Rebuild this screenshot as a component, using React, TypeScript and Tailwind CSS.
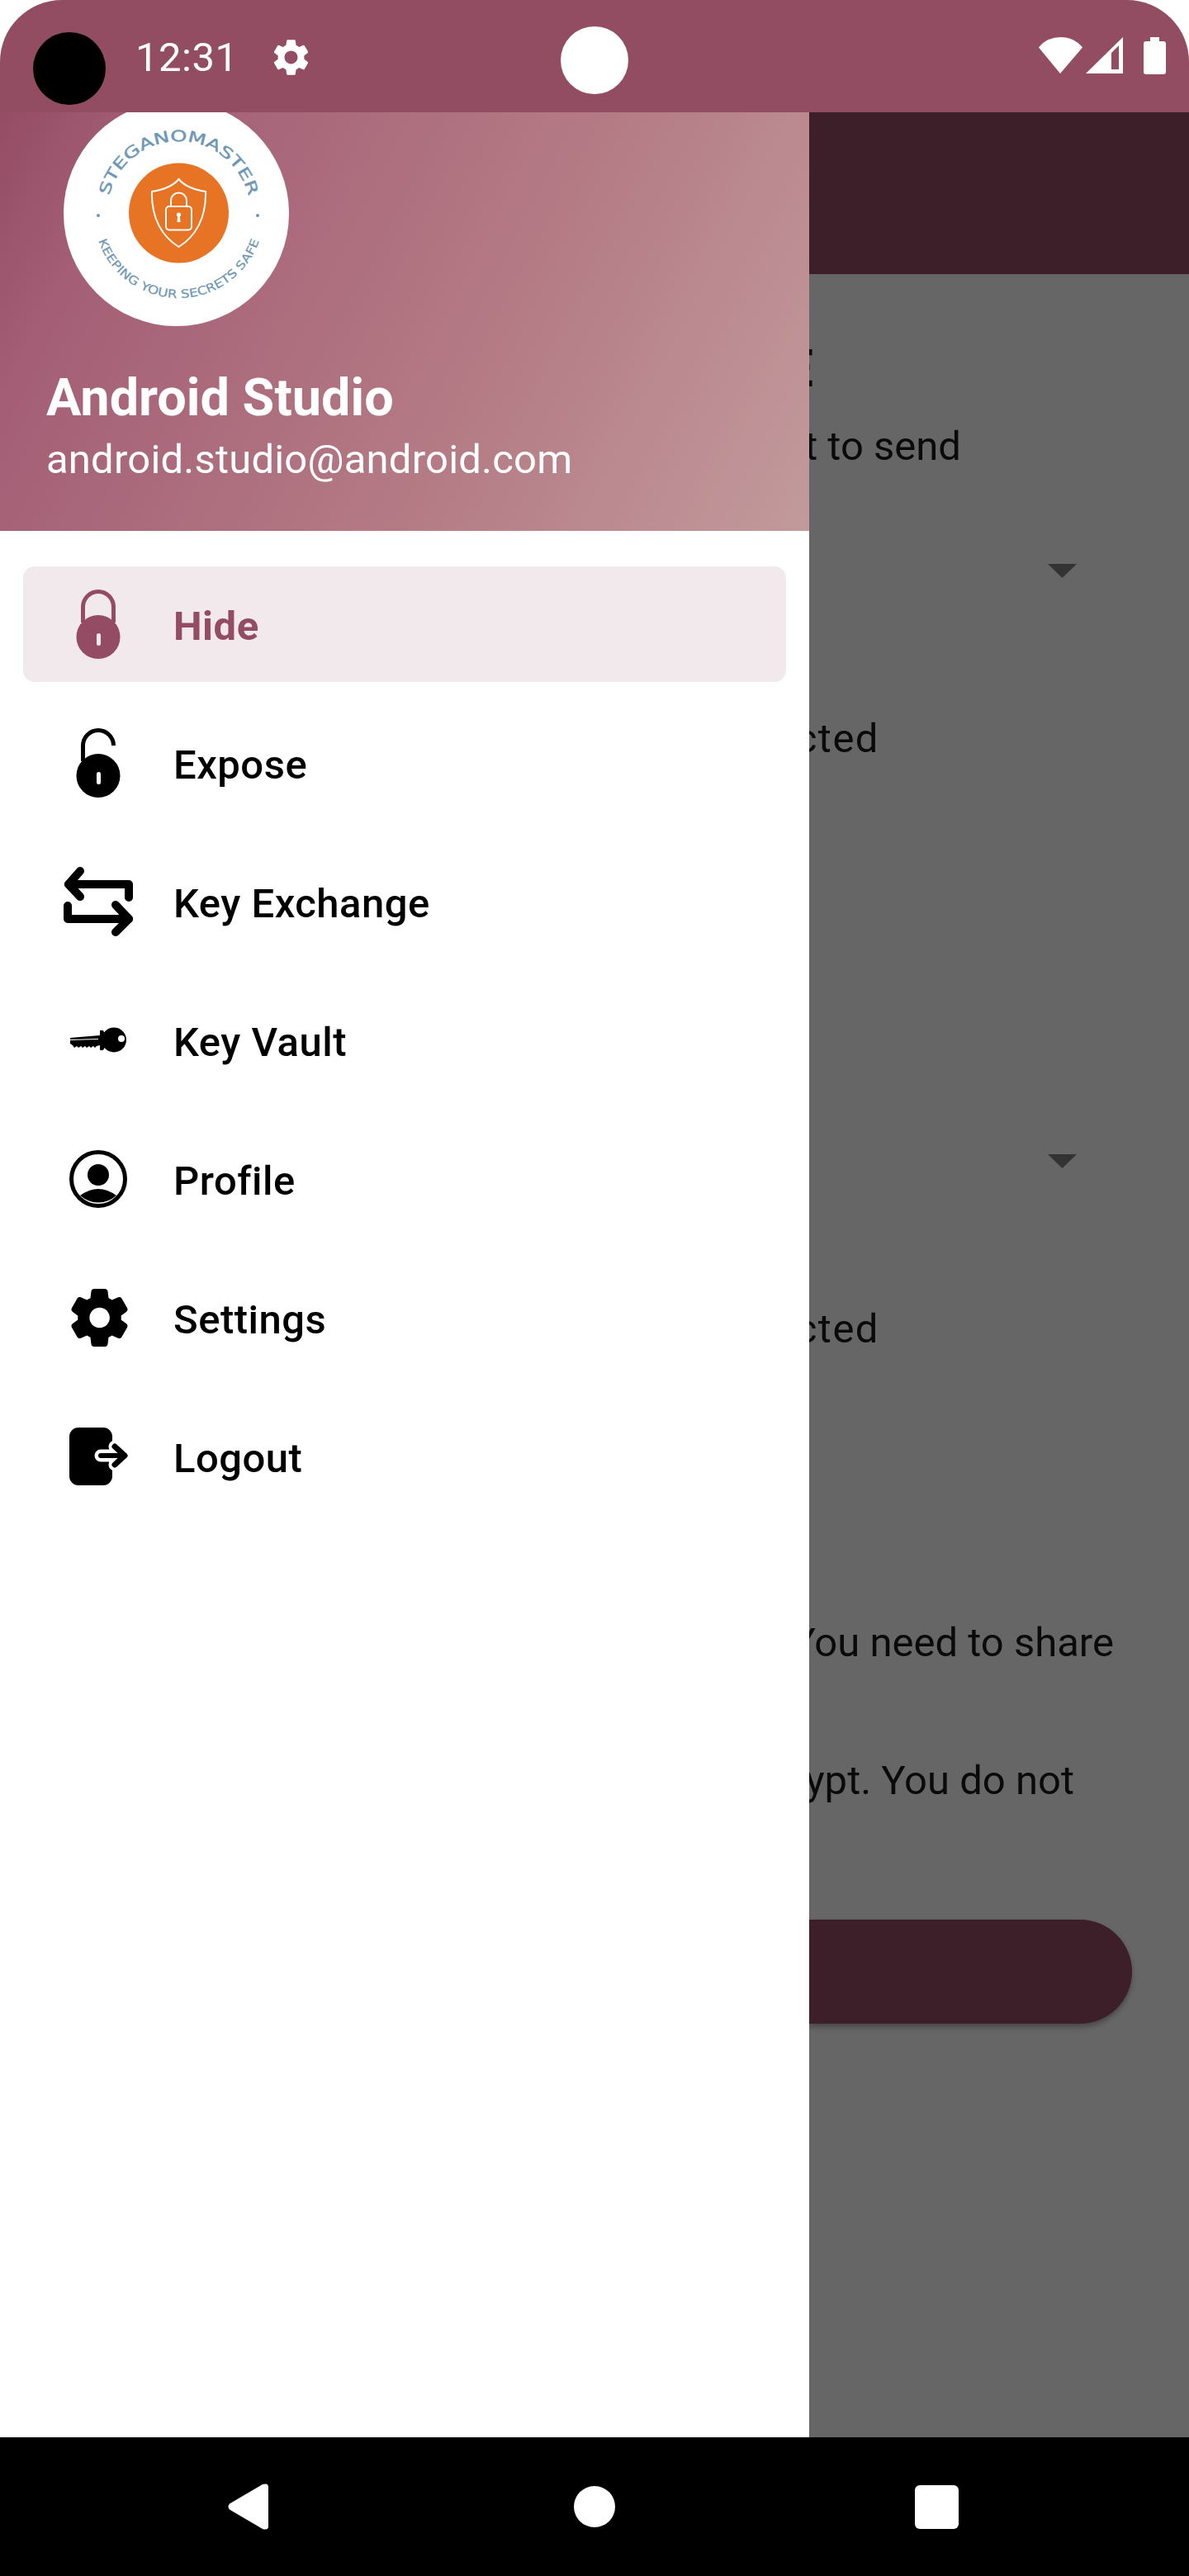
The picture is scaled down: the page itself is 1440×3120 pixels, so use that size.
import { MdSettings } from "react-icons/md";

const ROUNDED_GEAR =
  "M19.5,12c0,-0.23 -0.01,-0.45 -0.03,-0.68l1.86,-1.41c0.4,-0.3 0.51,-0.86 0.26,-1.3l-1.87,-3.23c-0.25,-0.44 -0.79,-0.62 -1.25,-0.42l-2.15,0.91c-0.37,-0.26 -0.76,-0.49 -1.17,-0.68l-0.29,-2.31C14.8,2.38 14.37,2 13.87,2h-3.73C9.63,2 9.2,2.38 9.14,2.88L8.85,5.19c-0.41,0.19 -0.8,0.42 -1.17,0.68L5.53,4.96c-0.46,-0.2 -1,-0.02 -1.25,0.42L2.41,8.62c-0.25,0.44 -0.14,0.99 0.26,1.3l1.86,1.41C4.51,11.55 4.5,11.77 4.5,12s0.01,0.45 0.03,0.68l-1.86,1.41c-0.4,0.3 -0.51,0.86 -0.26,1.3l1.87,3.23c0.25,0.44 0.79,0.62 1.25,0.42l2.15,-0.91c0.37,0.26 0.76,0.49 1.17,0.68l0.29,2.31C9.2,21.62 9.63,22 10.13,22h3.73c0.5,0 0.93,-0.38 0.99,-0.88l0.29,-2.31c0.41,-0.19 0.8,-0.42 1.17,-0.68l2.15,0.91c0.46,0.2 1,0.02 1.25,-0.42l1.87,-3.23c0.25,-0.44 0.14,-0.99 -0.26,-1.3l-1.86,-1.41C19.49,12.45 19.5,12.23 19.5,12zM12.04,15.5c-1.93,0 -3.5,-1.57 -3.5,-3.5s1.57,-3.5 3.5,-3.5s3.5,1.57 3.5,3.5S13.97,15.5 12.04,15.5z";

function IconBox({ children }: { children: React.ReactNode }) {
  return (
    <svg viewBox="0 0 84 84" className="h-[84px] w-[84px] shrink-0">
      {children}
    </svg>
  );
}

function LockClosed() {
  return (
    <IconBox>
      <path d="M23.5 40V21a18.5 18.5 0 0 1 37 0V40" fill="none" stroke="#934c63" strokeWidth="5" />
      <circle cx="42" cy="57.5" r="26.5" fill="#934c63" />
      <rect x="40" y="53" width="5" height="15" rx="2.5" fill="#f2e9ec" />
    </IconBox>
  );
}

function LockOpen() {
  return (
    <IconBox>
      <path d="M23.5 40V21a18.5 18.5 0 0 1 37 0" fill="none" stroke="#000" strokeWidth="5" />
      <circle cx="42" cy="57.5" r="26.5" fill="#000" />
      <rect x="40" y="53" width="5" height="15" rx="2.5" fill="#fff" />
    </IconBox>
  );
}

function Exchange() {
  return (
    <IconBox>
      <g fill="none" stroke="#000" strokeWidth="10" strokeLinecap="round" strokeLinejoin="round">
        <path d="M79 37V21H6" />
        <path d="M20 5L6 21L20 36" />
        <path d="M5 47V63H79" />
        <path d="M63 46L79 63L63 79" />
      </g>
    </IconBox>
  );
}

function KeyIcon() {
  return (
    <IconBox>
      <polygon
        points="8,39 44,36 44,30 48,30 50,34 50,50 48,54 44,54 44,48 40,49 38,51 36,49 33,51 31,49 28,51 26,49 23,51 21,49 18,51 16,49 13,51 11,48 8,46"
        fill="#000"
      />
      <circle cx="61" cy="41.5" r="15" fill="#000" />
      <circle cx="70" cy="40" r="4" fill="#fff" />
      <line x1="8" y1="41.5" x2="42" y2="40.5" stroke="#fff" strokeWidth="1" />
    </IconBox>
  );
}

function ProfileIcon() {
  return (
    <IconBox>
      <circle cx="42" cy="42" r="32.5" fill="none" stroke="#000" strokeWidth="5" />
      <circle cx="42" cy="37" r="13" fill="#000" />
      <path d="M20 62Q42 46 64 62A33 33 0 0 1 20 62Z" fill="#000" />
    </IconBox>
  );
}

function GearIcon() {
  return (
    <IconBox>
      <path transform="translate(1.5 0) scale(3.5)" d={ROUNDED_GEAR} fill="#000" />
    </IconBox>
  );
}

function LogoutIcon() {
  return (
    <IconBox>
      <rect x="7" y="7" width="52" height="70" rx="11" fill="#000" />
      <g fill="none" strokeLinecap="round" strokeLinejoin="round">
        <path d="M45 41H74M62 30L74 41L62 52" stroke="#fff" strokeWidth="15" />
        <path d="M45 41H74" stroke="#000" strokeWidth="6" />
        <path d="M62 30L74 41L62 52" stroke="#000" strokeWidth="7" />
      </g>
    </IconBox>
  );
}

const NAV_ITEMS = [
  { label: "Hide", icon: <LockClosed />, active: true },
  { label: "Expose", icon: <LockOpen /> },
  { label: "Key Exchange", icon: <Exchange /> },
  { label: "Key Vault", icon: <KeyIcon /> },
  { label: "Profile", icon: <ProfileIcon /> },
  { label: "Settings", icon: <GearIcon /> },
  { label: "Logout", icon: <LogoutIcon /> },
];

function Logo() {
  const logoFont = "'DejaVu Sans', sans-serif";
  return (
    <svg viewBox="0 0 273 273" className="-mt-[14px] ml-[77px] h-[273px] w-[273px] shrink-0">
      <circle cx="136.5" cy="136.5" r="136.5" fill="#fff" />
      <defs>
        <path id="logo-top" d="M55.1 115A87 87 0 0 1 223.9 115" />
        <path id="logo-bottom" d="M42.1 169.5A103 103 0 0 0 236.9 169.5" />
      </defs>
      <text fontFamily={logoFont} fontSize="18.5" fill="#6d97b5" stroke="#6d97b5" strokeWidth="0.4">
        <textPath href="#logo-top" textLength="231" lengthAdjust="spacingAndGlyphs">
          STEGANOMASTER
        </textPath>
      </text>
      <text fontFamily={logoFont} fontSize="14" fill="#6d97b5" stroke="#6d97b5" strokeWidth="0.2">
        <textPath href="#logo-bottom" textLength="255" lengthAdjust="spacingAndGlyphs">
          KEEPING YOUR SECRETS SAFE
        </textPath>
      </text>
      <circle cx="42" cy="139" r="2" fill="#6d97b5" />
      <circle cx="235" cy="139" r="2" fill="#6d97b5" />
      <circle cx="139.5" cy="136" r="60.5" fill="#e77325" />
      <g transform="translate(79 75)" fill="none" stroke="#fff" strokeWidth="2">
        <path d="M60.5 20C68 29 80 33 93 35C94 68 80 90 60.5 102C41 90 27 68 28 35C41 33 53 29 60.5 20Z" />
        <rect x="45" y="53" width="31" height="28.5" rx="4" />
        <path d="M51 53V46a9.5 9.5 0 0 1 19 0V53" />
        <circle cx="60.5" cy="63" r="2.6" fill="#fff" stroke="none" />
        <path d="M59.3 64L58.5 72H62.5L61.7 64Z" fill="#fff" stroke="none" />
      </g>
    </svg>
  );
}

function StatusBar() {
  return (
    <div className="grid h-[136px] shrink-0 grid-cols-[1fr_82px_1fr] rounded-t-[75px] bg-[#934d63]">
      <div className="flex items-start text-white">
        <div className="ml-[40px] mt-[39px] h-[88px] w-[88px] shrink-0 rounded-full bg-black" />
        <span className="ml-[36px] mt-[41px] text-[49px] leading-[58px] tracking-[0.5px]">12:31</span>
        <MdSettings className="ml-[37px] mt-[43px] h-[53px] w-[53px]" />
      </div>
      <div className="mt-[32px] h-[82px] w-[82px] rounded-full bg-white" />
      <div className="flex items-start justify-end pr-[28px] pt-[45px]">
        <svg viewBox="0 0 53 44" className="h-[44px] w-[53px]">
          <path d="M0 12.5Q10 0 26.5 0T53 12.5L26 44Z" fill="#fff" />
        </svg>
        <svg viewBox="0 0 45 44" className="ml-[4px] h-[44px] w-[45px]">
          <path d="M0 44L45 0V44Z M31 19V39H40V10Z" fill="#fff" fillRule="evenodd" />
        </svg>
        <svg viewBox="0 0 27 45" className="ml-[25px] h-[45px] w-[27px]">
          <path d="M8 0H19V5H24Q27 5 27 8V42Q27 45 24 45H3Q0 45 0 42V8Q0 5 3 5H8Z" fill="#fff" />
        </svg>
      </div>
    </div>
  );
}

function Drawer() {
  return (
    <div className="flex flex-col bg-white">
      <div className="flex h-[507px] flex-col overflow-hidden bg-[linear-gradient(117deg,#934c63_0%,#a45f76_15%,#b47b85_60%,#c29a9c_100%)] text-white">
        <Logo />
        <div className="ml-[56px] mt-[50px] text-[63px] font-bold leading-[74px]">Android Studio</div>
        <div className="ml-[56px] mt-[9px] text-[49px] leading-[58px] tracking-[0.2px]">android.studio@android.com</div>
      </div>
      <nav className="flex flex-col pt-[29px]">
        {NAV_ITEMS.map((item) => (
          <div
            key={item.label}
            className={
              item.active
                ? "mx-[28px] my-[14px] flex h-[140px] items-center gap-[49px] rounded-[14px] bg-[#f2e9ec] px-[49px] text-[49px] font-bold tracking-[0.5px] text-[#934c63]"
                : "mx-[28px] my-[14px] flex h-[140px] items-center gap-[49px] rounded-[14px] px-[49px] text-[49px] font-medium tracking-[0.5px] text-black"
            }
          >
            {item.icon}
            <span className="pt-[6px]">{item.label}</span>
          </div>
        ))}
      </nav>
    </div>
  );
}

function Caret({ className }: { className: string }) {
  return (
    <svg viewBox="0 0 35 17" className={className}>
      <path d="M0 0H35L17.5 17Z" fill="#333" />
    </svg>
  );
}

// what is left of the page behind the open drawer, clipped at its edge
function PageBehind() {
  return (
    <div className="flex flex-col overflow-hidden whitespace-nowrap bg-[#666] text-[49px] leading-[58px] text-[#0a0a0a]">
      <div className="h-[196px] shrink-0 bg-[#3c1f29]" />
      <div className="mt-[78px] flex w-[5px] justify-end text-[63px] font-bold leading-[74px]">E</div>
      <div className="mt-[28px] flex w-[184px] justify-end">t to send</div>
      <Caret className="ml-[289px] mt-[113px] h-[17px] w-[35px] shrink-0" />
      <div className="mt-[166px] flex w-[85px] justify-end tracking-[1.5px]">cted</div>
      <Caret className="ml-[289px] mt-[474px] h-[17px] w-[35px] shrink-0" />
      <div className="mt-[166px] flex w-[85px] justify-end tracking-[1.5px]">cted</div>
      <div className="mt-[322px] flex w-[369px] justify-end">You need to share</div>
      <div className="mt-[109px] flex w-[321px] justify-end">ypt. You do not</div>
      <div className="mt-[139px] h-[126px] w-[391px] shrink-0 rounded-r-[63px] bg-[#3c1f29] shadow-[0_4px_6px_rgba(0,0,0,0.3)]" />
    </div>
  );
}

function NavBar() {
  return (
    <div className="flex h-[168px] shrink-0 items-center bg-black pl-[276px]">
      <svg viewBox="0 0 49 56" className="h-[56px] w-[49px]">
        <path d="M2 24.5L42 1Q49 -1 49 4V52Q49 57 42 55L2 31.5Q-1 28 2 24.5Z" fill="#fff" />
      </svg>
      <div className="ml-[370px] h-[50px] w-[50px] rounded-full bg-white" />
      <div className="ml-[363px] h-[53px] w-[53px] rounded-[6px] bg-white" />
    </div>
  );
}

export default function App() {
  return (
    <div className="flex h-[3120px] w-[1440px] flex-col overflow-hidden bg-white font-['Roboto',sans-serif]">
      <StatusBar />
      <div className="grid min-h-0 flex-1 grid-cols-[980px_1fr]">
        <Drawer />
        <PageBehind />
      </div>
      <NavBar />
    </div>
  );
}
